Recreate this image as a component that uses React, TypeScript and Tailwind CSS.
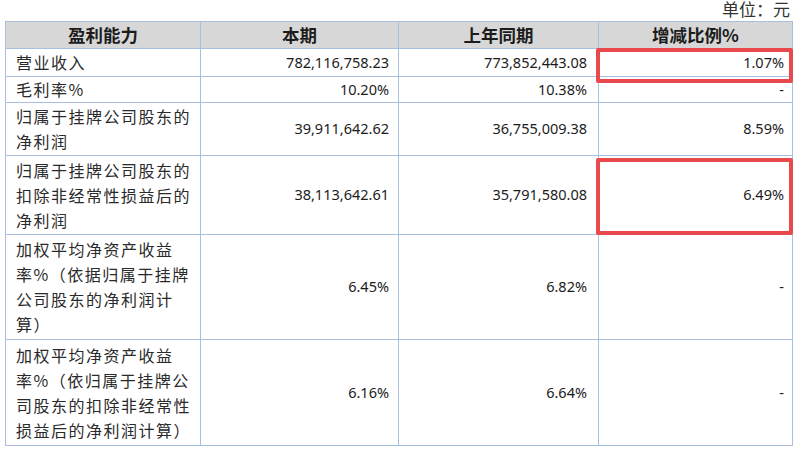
const cjk = "font-['Noto_Sans_CJK_SC','Noto_Sans',sans-serif]";
const num = "font-['Noto_Sans','Noto_Sans_CJK_SC',sans-serif]";

type Row = {
  label: string[];
  cur: string;
  prev: string;
  change: string;
  h: string;
  boxed?: "top" | "mid";
};

const rows: Row[] = [
  { label: ["营业收入"], cur: "782,116,758.23", prev: "773,852,443.08", change: "1.07%", h: "h-[28px]", boxed: "top" },
  { label: ["毛利率%"], cur: "10.20%", prev: "10.38%", change: "-", h: "h-[26px]" },
  { label: ["归属于挂牌公司股东的", "净利润"], cur: "39,911,642.62", prev: "36,755,009.38", change: "8.59%", h: "h-[53px]" },
  {
    label: ["归属于挂牌公司股东的", "扣除非经常性损益后的", "净利润"],
    cur: "38,113,642.61",
    prev: "35,791,580.08",
    change: "6.49%",
    h: "h-[79px]",
    boxed: "mid",
  },
  {
    label: ["加权平均净资产收益", "率%（依据归属于挂牌", "公司股东的净利润计", "算）"],
    cur: "6.45%",
    prev: "6.82%",
    change: "-",
    h: "h-[105px]",
  },
  {
    label: ["加权平均净资产收益", "率%（依归属于挂牌公", "司股东的扣除非经常性", "损益后的净利润计算）"],
    cur: "6.16%",
    prev: "6.64%",
    change: "-",
    h: "h-[106px]",
  },
];

export default function App() {
  return (
    <div className="h-[449px] w-[795px] overflow-hidden bg-white text-[#1c1c1c]">
      <div className="flex h-[21px] items-center justify-end pr-[5px] font-['Liberation_Serif','Noto_Sans_CJK_SC',serif] text-[17px] leading-none text-[#333]">
        单位：元
      </div>
      <table className="ml-[5px] w-[787px] table-fixed border-collapse">
        <colgroup>
          <col className="w-[195px]" />
          <col className="w-[198px]" />
          <col className="w-[200px]" />
          <col className="w-[194px]" />
        </colgroup>
        <thead>
          <tr className={`h-[27px] bg-[#d7d7d7] text-[17.5px] font-bold ${cjk}`}>
            {["盈利能力", "本期", "上年同期", "增减比例%"].map((t) => (
              <th key={t} className="border border-[#a9bfdf] p-0 text-center leading-none">
                {t}
              </th>
            ))}
          </tr>
        </thead>
        <tbody>
          {rows.map((r) => (
            <tr key={r.label.join("")} className={r.h}>
              <td className={`border border-[#a9bfdf] py-0 pl-[10px] pr-1 text-[16px] leading-[25px] tracking-[1.5px] text-[#2a2a2a] ${cjk}`}>
                {r.label.map((l) => (
                  <div key={l} className="whitespace-nowrap">
                    {l}
                  </div>
                ))}
              </td>
              <td className={`border border-[#a9bfdf] py-0 pr-[9px] text-right text-[14.5px] ${num}`}>{r.cur}</td>
              <td className={`border border-[#a9bfdf] py-0 pr-[11px] text-right text-[14.5px] ${num}`}>{r.prev}</td>
              <td className={`relative border border-[#a9bfdf] py-0 pr-[8px] text-right text-[14.5px] ${num}`}>
                {r.change}
                {r.boxed === "top" && (
                  <div className="absolute -top-[1px] -bottom-[7px] -left-[3px] -right-[1px] rounded-[2px] border-4 border-[#e9484c]" />
                )}
                {r.boxed === "mid" && (
                  <div className="absolute top-[2px] -bottom-[1px] -left-[3px] -right-[1px] rounded-[2px] border-4 border-[#e9484c]" />
                )}
              </td>
            </tr>
          ))}
        </tbody>
      </table>
    </div>
  );
}
